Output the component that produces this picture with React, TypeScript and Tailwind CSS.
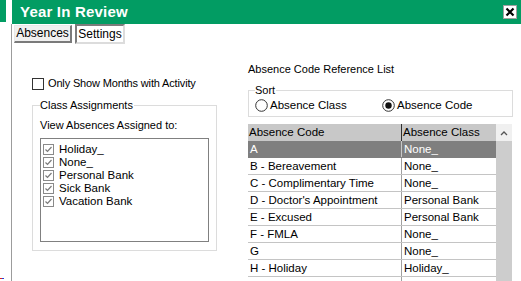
import React from 'react';

const classes = ['Holiday_', 'None_', 'Personal Bank', 'Sick Bank', 'Vacation Bank'];

const codes = [
  ['A', 'None_'],
  ['B - Bereavement', 'None_'],
  ['C - Complimentary Time', 'None_'],
  ["D - Doctor's Appointment", 'Personal Bank'],
  ['E - Excused', 'Personal Bank'],
  ['F - FMLA', 'None_'],
  ['G', 'None_'],
  ['H - Holiday', 'Holiday_'],
  ['', ''],
];

const Check = () => (
  <svg width="11" height="11" viewBox="0 0 11 11" className="shrink-0">
    <rect x="0.5" y="0.5" width="10" height="10" fill="white" stroke="#8a8a8a" />
    <path d="M2.5 5.5 L4.5 7.5 L8.5 3" fill="none" stroke="#7a7a7a" strokeWidth="1.2" />
  </svg>
);

const Radio = ({ on }: { on?: boolean }) => (
  <svg width="13" height="13" viewBox="0 0 13 13" className="shrink-0">
    <circle cx="6.5" cy="6.5" r="5.8" fill="white" stroke="#333" />
    {on && <circle cx="6.5" cy="6.5" r="3.2" fill="#111" />}
  </svg>
);

export default function App() {
  return (
    <div className="w-[521px] h-[281px] bg-white flex overflow-hidden text-[11px] leading-[13px] text-black [font-family:'Liberation_Sans',Arial,sans-serif]">
      {/* left sliver of the window behind */}
      <div className="w-[6px] shrink-0 flex flex-col">
        <div className="h-[22px] shrink-0 bg-[#029c63]" />
        <div className="flex-1" />
        <div className="h-px mb-[2px] flex">
          <div className="w-[2px] bg-[#e02020]" />
          <div className="w-[2px] bg-[#2040e0]" />
        </div>
      </div>
      <div className="w-[5px] shrink-0" />

      <div className="flex-1 flex flex-col min-h-0">
        {/* title bar */}
        <div className="ml-px h-[24px] shrink-0 bg-[#029c63] flex items-center pl-[8px] pr-[4px]">
          <span className="text-white font-bold text-[15px] leading-[18px] tracking-[0.2px]">Year In Review</span>
          <div className="ml-auto w-[14px] h-[14px] bg-white border border-[#a0a0a0] flex items-center justify-center">
            <svg width="10" height="10" viewBox="0 0 10 10">
              <path d="M1.5 1.5 L8.5 8.5 M8.5 1.5 L1.5 8.5" stroke="black" strokeWidth="2.2" />
            </svg>
          </div>
        </div>

        <div className="flex-1 min-h-0 border-l border-[#9c9c9c] flex flex-col">
          {/* tabs */}
          <div className="shrink-0 flex items-start pt-px pl-[2px]">
            <div className="w-[58px] h-[18px] bg-[#f0f0f0] border border-[#e8e8e8] border-r-2 border-b-2 border-r-[#7a7a7a] border-b-[#7a7a7a] flex items-center justify-center text-[12px]">
              Absences
            </div>
            <div className="ml-[3px] -mt-px w-[50px] h-[20px] bg-white border-2 border-[#7c7c7c] border-r-[#dcdcdc] border-b-[#dcdcdc] flex items-center justify-center text-[12px]">
              Settings
            </div>
          </div>

          <div className="flex">
            {/* left column */}
            <div className="ml-[20px] w-[185px] flex flex-col">
              <label className="mt-[33px] flex items-center gap-[4px]">
                <span className="w-[12px] h-[12px] border border-[#333] bg-white" />
                <span className="text-[11px] tracking-[-0.15px]">Only Show Months with Activity</span>
              </label>
              <div className="mt-[15px] relative border border-[#dcdcdc] h-[146px] pl-[7px] pr-[7px]">
                <span className="absolute -top-[7px] left-[7px] bg-white pr-px">Class Assignments</span>
                <div className="mt-[13px]">View Absences Assigned to:</div>
                <div className="mt-[6px] h-[104px] border border-[#808080] px-[2px] pt-[4px] flex flex-col">
                  {classes.map((c) => (
                    <div key={c} className="flex items-center gap-[5px] h-[13px]">
                      <Check />
                      <span className="text-[11.5px]">{c}</span>
                    </div>
                  ))}
                </div>
              </div>
            </div>

            {/* right column */}
            <div className="ml-[31px] w-[265px] flex flex-col">
              <div className="mt-[19px]">Absence Code Reference List</div>
              <div className="mt-[14px] relative border border-[#dcdcdc] h-[27px] flex items-center pl-[6px]">
                <span className="absolute -top-[7px] left-[6px] bg-white pr-px">Sort</span>
                <div className="mt-[4px] flex items-center">
                  <div className="w-[127px] flex items-center gap-[2px]">
                    <Radio />
                    <span className="text-[11.5px]">Absence Class</span>
                  </div>
                  <div className="flex items-center gap-[2px]">
                    <Radio on />
                    <span className="text-[11.5px]">Absence Code</span>
                  </div>
                </div>
              </div>

              <div className="mt-[7px] flex">
                <div className="w-[248px] flex flex-col">
                  <div className="h-[17px] bg-[#c8c8c8] flex items-center">
                    <div className="w-[153px] pl-px text-[11.5px]">Absence Code</div>
                    <div className="flex-1 h-full border-l border-[#303030] pl-px flex items-center text-[11.5px]">Absence Class</div>
                  </div>
                  {codes.map(([code, cls], i) => (
                    <div
                      key={i}
                      className={`h-[17px] shrink-0 flex border-b ${i === 0 ? 'bg-[#7f7f7f] text-white border-[#7f7f7f]' : 'border-[#c4c4c4]'}`}
                    >
                      <div className="w-[153px] pl-[2px] flex items-center text-[11.5px]">{code}</div>
                      <div className={`flex-1 border-l pl-[2px] flex items-center text-[11.5px] ${i === 0 ? 'border-[#c8c8c8]' : 'border-[#a0a0a0]'}`}>{cls}</div>
                    </div>
                  ))}
                </div>
                <div className="w-[16px] flex flex-col">
                  <div className="h-[17px] bg-[#f0f0f0] flex items-center justify-center">
                    <svg width="8" height="6" viewBox="0 0 8 6">
                      <path d="M1 5 L4 2 L7 5" fill="none" stroke="#555" strokeWidth="1.3" />
                    </svg>
                  </div>
                  <div className="flex-1 bg-[#cdcdcd]" />
                </div>
              </div>
            </div>
          </div>
        </div>
      </div>
    </div>
  );
}
